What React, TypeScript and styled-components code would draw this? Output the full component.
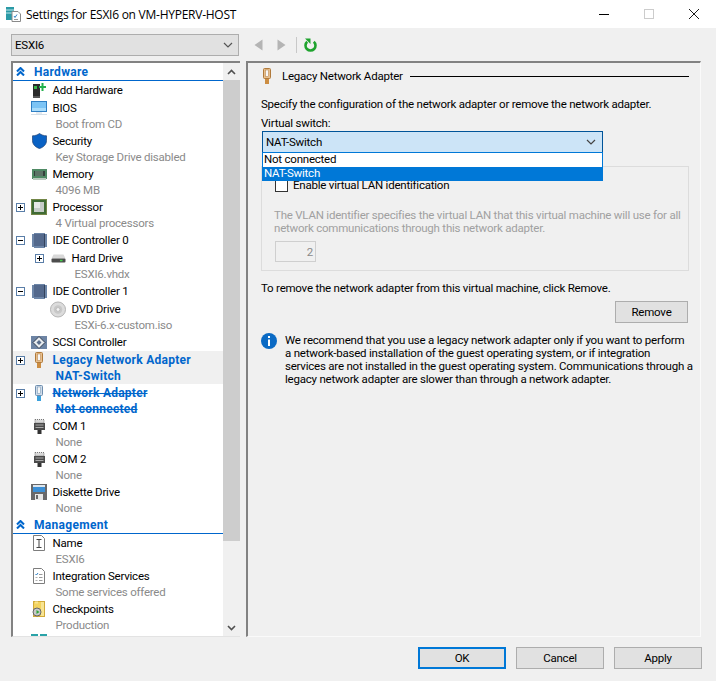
import React from 'react';
import styled, { createGlobalStyle } from 'styled-components';

const GlobalStyle = createGlobalStyle`
  html, body {
    margin: 0;
    padding: 0;
    background: #f0f0f0;
  }
  body {
    font-family: Roboto, "Liberation Sans", sans-serif;
    font-size: 11.5px;
    letter-spacing: -0.22px;
    color: #000;
  }
`;

const Page = styled.div`
  width: 716px;
  height: 681px;
  display: flex;
  flex-direction: column;
  overflow: hidden;
`;

const TitleBar = styled.div`
  height: 28px;
  background: #fff;
  display: flex;
  align-items: center;
  padding-left: 6px;
  gap: 5px;
  flex: none;
`;

const TitleText = styled.div`
  flex: 1;
  white-space: nowrap;
  font-family: "Open Sans", sans-serif;
  font-size: 12px;
  letter-spacing: -0.25px;
`;

const WindowButtons = styled.div`
  display: flex;
  align-items: center;
  gap: 35px;
  padding-right: 17px;
`;

const ToolRow = styled.div`
  height: 33px;
  display: flex;
  align-items: center;
  padding-left: 11px;
  flex: none;
`;

const Select = styled.div`
  width: 228px;
  height: 22px;
  box-sizing: border-box;
  background: #e1e1e1;
  border: 1px solid #adadad;
  display: flex;
  align-items: center;
  justify-content: space-between;
  padding: 0 5px 0 3px;
`;

const Tools = styled.div`
  display: flex;
  align-items: center;
  margin-left: 15px;
  gap: 14px;
`;

const ToolSep = styled.div`
  width: 1px;
  height: 16px;
  background: #c8c8c8;
  margin: 0 -7px 0 -4px;
`;

const Main = styled.div`
  display: flex;
  gap: 6px;
  padding-left: 11px;
  height: 576px;
  flex: none;
`;

const Sidebar = styled.div`
  width: 229px;
  box-sizing: border-box;
  background: #fff;
  border-top: 2px solid #828282;
  border-left: 2px solid #828282;
  border-bottom: 1px solid #e3e3e3;
  display: flex;
  overflow: hidden;
`;

const Tree = styled.div`
  flex: 1;
  min-width: 0;
  overflow: hidden;
`;

const Section = styled.div`
  height: 17px;
  border-bottom: 1px solid #0066cc;
  display: flex;
  align-items: center;
  gap: 9px;
  padding-left: 3px;
  color: #0066cc;
  font-size: 12px;
  letter-spacing: 0.3px;
  font-weight: 700;
`;

const Item = styled.div<{ $selected?: boolean }>`
  background: ${(p) => (p.$selected ? '#f0f0f0' : 'transparent')};
`;

const ItemRow = styled.div<{ $level: number }>`
  height: 18px;
  display: flex;
  align-items: center;
  padding-left: ${(p) => 3 + p.$level * 19}px;
`;

const Expander = styled.div`
  width: 15px;
  flex: none;
  display: flex;
`;

const IconSlot = styled.div`
  width: 16px;
  height: 18px;
  flex: none;
  margin-right: 5.5px;
  display: flex;
  align-items: center;
  justify-content: center;
`;

const ItemTitle = styled.div<{ $active?: boolean; $strike?: boolean }>`
  white-space: nowrap;
  color: ${(p) => (p.$active ? '#0066cc' : '#000')};
  font-weight: ${(p) => (p.$active ? 700 : 400)};
  font-size: ${(p) => (p.$active ? '12px' : 'inherit')};
  letter-spacing: ${(p) => (p.$active ? '0.25px' : 'inherit')};
  text-decoration: ${(p) => (p.$strike ? 'line-through' : 'none')};
`;

const ItemSub = styled.div<{ $level: number; $active?: boolean; $strike?: boolean }>`
  height: 15px;
  line-height: 14px;
  white-space: nowrap;
  padding-left: ${(p) => 42.5 + p.$level * 19}px;
  color: ${(p) => (p.$active ? '#0066cc' : '#8a8a8a')};
  font-weight: ${(p) => (p.$active ? 700 : 400)};
  font-size: ${(p) => (p.$active ? '12px' : 'inherit')};
  letter-spacing: ${(p) => (p.$active ? '0.25px' : 'inherit')};
  text-decoration: ${(p) => (p.$strike ? 'line-through' : 'none')};
`;

const ScrollBar = styled.div`
  width: 17px;
  flex: none;
  background: #f0f0f0;
  display: flex;
  flex-direction: column;
`;

const ScrollButton = styled.div`
  height: 17px;
  flex: none;
  display: flex;
  align-items: center;
  justify-content: center;
`;

const ScrollThumb = styled.div`
  height: 461px;
  flex: none;
  background: #cdcdcd;
`;

const ScrollTrack = styled.div`
  flex: 1;
`;

const Content = styled.div`
  width: 455px;
  box-sizing: border-box;
  border-top: 2px solid #828282;
  border-left: 2px solid #828282;
  border-right: 1px solid #fafafa;
  border-bottom: 1px solid #fafafa;
  padding: 0 11px 0 13px;
`;

const Heading = styled.div`
  height: 26px;
  display: flex;
  align-items: center;
  padding-left: 2px;
`;

const HeadingText = styled.div`
  margin-left: 11px;
  white-space: nowrap;
`;

const HeadingRule = styled.div`
  flex: 1;
  height: 1px;
  background: #000;
  margin-left: 7px;
`;

const Line = styled.div`
  height: 16px;
  line-height: 16px;
  white-space: nowrap;
`;

const Description = styled(Line)`
  margin-top: 7px;
`;

const Label = styled(Line)`
  margin-top: 3px;
`;

const ComboWrap = styled.div`
  position: relative;
  width: 341px;
  margin-left: 1px;
  height: 22px;
  z-index: 2;
`;

const Combo = styled.div`
  height: 22px;
  box-sizing: border-box;
  background: #cce4f7;
  border: 1px solid #005499;
  display: flex;
  align-items: center;
  justify-content: space-between;
  padding: 0 6px 0 3px;
`;

const DropList = styled.div`
  position: absolute;
  left: 0;
  right: 0;
  top: 21px;
  background: #fff;
  border: 1px solid #0078d7;
`;

const DropOption = styled.div<{ $on?: boolean }>`
  height: 13.5px;
  line-height: 13.5px;
  padding-left: 1px;
  background: ${(p) => (p.$on ? '#0078d7' : '#fff')};
  color: ${(p) => (p.$on ? '#fff' : '#000')};
`;

const VlanBox = styled.div`
  margin-top: 13px;
  height: 105px;
  box-sizing: border-box;
  border: 1px solid #dcdcdc;
  padding: 11px 12px 0 13px;
`;

const CheckRow = styled.div`
  display: flex;
  align-items: center;
  gap: 5px;
  height: 14px;
`;

const CheckBox = styled.div`
  width: 13px;
  height: 13px;
  box-sizing: border-box;
  background: #fff;
  border: 1px solid #333;
`;

const MutedLine = styled(Line)`
  color: #a0a0a0;
  height: 13px;
  line-height: 13px;
`;

const MutedText = styled.div`
  margin-top: 17px;
  margin-left: -1px;
`;

const Spin = styled.div`
  margin-top: 6px;
  width: 41px;
  height: 21px;
  box-sizing: border-box;
  border: 1px solid #cfcfcf;
  color: #8a8a8a;
  display: flex;
  align-items: center;
  justify-content: flex-end;
  padding-right: 2px;
`;

const RemoveText = styled(Line)`
  margin-top: 9px;
`;

const RemoveRow = styled.div`
  display: flex;
  justify-content: flex-end;
  margin-top: 5px;
  padding-right: 1px;
`;

const Button = styled.div<{ $primary?: boolean; $width?: number }>`
  width: ${(p) => p.$width || 88}px;
  height: 22px;
  box-sizing: border-box;
  background: #e1e1e1;
  border: ${(p) => (p.$primary ? '2px solid #0078d7' : '1px solid #adadad')};
  display: flex;
  align-items: center;
  justify-content: center;
`;

const Note = styled.div`
  margin-top: 10px;
  display: flex;
  gap: 8px;
`;

const NoteText = styled.div`
  margin-top: 1px;
`;

const NoteLine = styled.div`
  height: 13px;
  line-height: 13px;
  white-space: nowrap;
`;

const Footer = styled.div`
  display: flex;
  justify-content: flex-end;
  gap: 10px;
  padding: 10px 14px 0 0;
`;

type IconName =
  | 'add' | 'bios' | 'shield' | 'memory' | 'cpu' | 'ide' | 'hdd' | 'dvd' | 'scsi'
  | 'legacy' | 'nic' | 'com' | 'floppy' | 'name' | 'services' | 'checkpoint' | 'peek';

const Plug = ({ fill, dark, pin }: { fill: string; dark: string; pin: string }) => (
  <svg width="8" height="16" viewBox="0 0 8 16">
    <rect x="0.500" y="0.500" width="7" height="10" rx="1" fill={fill} stroke={dark} />
    <rect x="2.500" y="2" width="3" height="6.500" fill="#f7f7f7" stroke={dark} strokeWidth="0.500" />
    <rect x="2" y="11" width="4" height="5" fill={pin} />
  </svg>
);

const TreeIcon = ({ name }: { name: IconName }) => {
  switch (name) {
    case 'add':
      return (
        <svg width="14" height="17" viewBox="0 0 14 17">
          <rect x="1" y="2" width="7" height="12" fill="#2b2b2b" />
          <rect x="1" y="14" width="7" height="2" fill="#555" />
          <rect x="2" y="4" width="3" height="3" fill="#39b54a" />
          <path d="M7 4h2.500V1h2v3H14v2h-2.500v3h-2V6H7z" fill="#22b14c" />
        </svg>
      );
    case 'bios':
      return (
        <svg width="16" height="14" viewBox="0 0 16 14">
          <rect x="0.500" y="0.500" width="15" height="10" fill="#7cc4f5" stroke="#2f7fc4" />
          <rect x="1" y="7" width="14" height="3" fill="#a8dcfb" />
          <rect x="0" y="13" width="16" height="1" fill="#d5dfe8" />
          <rect x="5" y="11" width="6" height="2" fill="#e4ebf1" />
        </svg>
      );
    case 'shield':
      return (
        <svg width="15" height="16" viewBox="0 0 15 16">
          <path d="M7.500 0.500C5.500 2 3 2.800 0.500 2.800V7.500c0 4 3 6.800 7 8 4-1.200 7-4 7-8V2.800C12 2.800 9.500 2 7.500 0.500z" fill="#0a62c4" stroke="#1c3f73" strokeWidth="0.700" />
        </svg>
      );
    case 'memory':
      return (
        <svg width="15" height="11" viewBox="0 0 15 11">
          <rect x="0" y="0" width="15" height="10" fill="#4f8a64" />
          <rect x="2" y="2" width="11" height="5" fill="#33413a" />
          <path d="M4 2v5M6 2v5M8 2v5M10 2v5" stroke="#86a892" />
          <rect x="1" y="9" width="13" height="2" fill="#b9c9bd" />
        </svg>
      );
    case 'cpu':
      return (
        <svg width="16" height="16" viewBox="0 0 16 16">
          <rect x="0" y="0" width="16" height="16" fill="#3f6b35" />
          <rect x="0.500" y="0.500" width="15" height="15" fill="none" stroke="#a7a35a" strokeDasharray="1 1" />
          <rect x="3" y="3" width="10" height="10" fill="#c6ccc8" />
          <rect x="3" y="3" width="6" height="6" fill="#e6e8e6" />
        </svg>
      );
    case 'ide':
      return (
        <svg width="15" height="15" viewBox="0 0 15 15">
          <path d="M0 1h2V0h11v1h2v13h-2v1H2v-1H0z" fill="#6d86a8" />
          <rect x="2" y="1" width="10" height="12" fill="#54698c" />
          <rect x="12" y="1" width="1" height="13" fill="#33425c" />
        </svg>
      );
    case 'hdd':
      return (
        <svg width="15" height="9" viewBox="0 0 15 9">
          <path d="M2.500 0.500h10l2 4h-14z" fill="#d8d8d8" />
          <rect x="0.500" y="4.500" width="14" height="4" rx="1" fill="#4c4c4c" />
          <rect x="9" y="5.800" width="2.500" height="1.500" fill="#43d04a" />
        </svg>
      );
    case 'dvd':
      return (
        <svg width="17" height="17" viewBox="0 0 17 17">
          <circle cx="8.500" cy="8.500" r="8" fill="#dcdcdc" stroke="#b0b0b0" />
          <circle cx="8.500" cy="8.500" r="4.500" fill="#c8c8c8" />
          <circle cx="8.500" cy="8.500" r="2" fill="#f4f4f4" stroke="#a8a8a8" strokeWidth="0.600" />
        </svg>
      );
    case 'scsi':
      return (
        <svg width="16" height="13" viewBox="0 0 16 13">
          <path d="M0 0h16v13H0z" fill="#6d84a4" />
          <path d="M8 0.500L14 6.500l-6 6-6-6z" fill="#e8ecef" stroke="#2e3a4e" />
          <path d="M8 4L10.500 6.500 8 9 5.500 6.500z" fill="#5a6f8e" />
        </svg>
      );
    case 'legacy':
      return <Plug fill="#e8bf8c" dark="#b07a3c" pin="#cc8d42" />;
    case 'nic':
      return <Plug fill="#cfdcea" dark="#6f8eae" pin="#3aa0dc" />;
    case 'com':
      return (
        <svg width="11" height="15" viewBox="0 0 11 15">
          <rect x="1" y="0.500" width="9" height="3.500" fill="#d8d8d8" stroke="#777" strokeDasharray="1 1" />
          <rect x="0" y="4" width="11" height="7" fill="#4a4a4a" />
          <path d="M1.500 6h8M1.500 8.500h8" stroke="#a9a9a9" />
          <rect x="3.500" y="11" width="4" height="4" fill="#333" />
        </svg>
      );
    case 'floppy':
      return (
        <svg width="16" height="16" viewBox="0 0 16 16">
          <rect x="0" y="0" width="16" height="16" fill="#68686a" />
          <rect x="2" y="1" width="12" height="7" fill="#3b8fd6" />
          <rect x="2" y="1" width="12" height="2" fill="#dde6ee" />
          <rect x="4" y="10" width="8" height="6" fill="#e6e6e6" />
          <rect x="5" y="11" width="2" height="4" fill="#68686a" />
        </svg>
      );
    case 'name':
      return (
        <svg width="12" height="16" viewBox="0 0 12 16">
          <path d="M0.500 0.500h8l3 3v12h-11z" fill="#fff" stroke="#7d7d7d" />
          <path d="M3.500 4.500h5M6 4.500v8M3.500 12.500h5" fill="none" stroke="#444" />
        </svg>
      );
    case 'services':
      return (
        <svg width="12" height="16" viewBox="0 0 12 16">
          <path d="M0.500 0.500h8l3 3v12h-11z" fill="#fff" stroke="#7d7d7d" />
          <path d="M2.500 6l1 1 1.500-2" fill="none" stroke="#2f7fc4" />
          <path d="M6 6.500h3.500M6 9.500h3.500M6 12.500h3.500" stroke="#9a9a9a" />
          <path d="M2.500 9.500h2M2.500 12.500h2" stroke="#b0b0b0" />
        </svg>
      );
    case 'checkpoint':
      return (
        <svg width="14" height="16" viewBox="0 0 14 16">
          <rect x="1" y="0" width="12" height="16" fill="#f3d35e" />
          <rect x="1.500" y="0.500" width="11" height="15" fill="none" stroke="#d0a93a" />
          <path d="M9 1h3v14H9z" fill="#f8e492" />
          <circle cx="5" cy="11" r="4" fill="#c9c9c9" stroke="#666" />
          <path d="M4.500 9l3 2-3 2z" fill="#2da83a" />
          <path d="M3 0.500h3v2H3z" fill="#f8e492" />
        </svg>
      );
    case 'peek':
      return (
        <svg width="16" height="18" viewBox="0 0 16 18">
          <rect x="0" y="1" width="7" height="17" fill="#2aa3a8" />
          <rect x="9" y="1" width="7" height="17" fill="#2aa3a8" />
        </svg>
      );
  }
};

const PlusMinus = ({ minus }: { minus?: boolean }) => (
  <svg width="9" height="9" viewBox="0 0 9 9">
    <rect x="0.500" y="0.500" width="8" height="8" fill="#fff" stroke="#5a7ea8" />
    <path d={minus ? 'M2 4.500h5' : 'M2 4.500h5M4.500 2v5'} stroke="#000" />
  </svg>
);

const Chevrons = () => (
  <svg width="9" height="9" viewBox="0 0 9 9">
    <path d="M1 4.500l3.500-3.500 3.500 3.500M1 8.500l3.500-3.500 3.500 3.500" fill="none" stroke="#0066cc" strokeWidth="2.100" />
  </svg>
);

const Chevron = ({ color }: { color?: string }) => (
  <svg width="10" height="6" viewBox="0 0 10 6">
    <path d="M1 1l4 4 4-4" fill="none" stroke={color || '#555'} strokeWidth="1.200" />
  </svg>
);

const ScrollArrow = ({ up }: { up?: boolean }) => (
  <svg width="9" height="6" viewBox="0 0 9 6">
    <path d={up ? 'M1 5l3.500-3.500L8 5' : 'M1 1l3.500 3.500L8 1'} fill="none" stroke="#505050" strokeWidth="1.600" />
  </svg>
);

const AppIcon = () => (
  <svg width="15" height="16" viewBox="0 0 15 16">
    <rect x="0" y="1" width="8" height="13" fill="#2b9aa6" />
    <path d="M0 4h8M0 7h8" stroke="#bfe6ea" />
    <path d="M6 5.500h6l2.500 2.500v7.500H6z" fill="#fff" stroke="#8a8a8a" />
    <path d="M8 10l1 1.500 2-3" fill="none" stroke="#2f7fc4" />
    <path d="M8 13.500h4" stroke="#999" />
  </svg>
);

const NavArrow = ({ right }: { right?: boolean }) => (
  <svg width="9" height="12" viewBox="0 0 9 12">
    <path d={right ? 'M0.500 0.500L8.500 6l-8 5.500z' : 'M8.500 0.500L0.500 6l8 5.500z'} fill="#b4b4b4" />
  </svg>
);

const Refresh = () => (
  <svg width="13" height="14" viewBox="0 0 13 14">
    <path d="M9.800 3.800A5 5 0 1 1 3.200 3.800" fill="none" stroke="#1fa32e" strokeWidth="2.600" />
    <path d="M1 0.500h5.500v5.500z" fill="#1fa32e" />
  </svg>
);

const InfoIcon = () => (
  <svg width="16" height="16" viewBox="0 0 16 16" style={{ flex: 'none' }}>
    <circle cx="8" cy="8" r="8" fill="#0a6ac4" />
    <rect x="7" y="3" width="2" height="2" fill="#fff" />
    <rect x="7" y="6.500" width="2" height="6.500" fill="#fff" />
  </svg>
);

type TreeEntry = {
  icon: IconName;
  title?: string;
  sub?: string;
  level?: number;
  expander?: 'plus' | 'minus';
  active?: boolean;
  strike?: boolean;
  selected?: boolean;
};

const hardware: TreeEntry[] = [
  { icon: 'add', title: 'Add Hardware' },
  { icon: 'bios', title: 'BIOS', sub: 'Boot from CD' },
  { icon: 'shield', title: 'Security', sub: 'Key Storage Drive disabled' },
  { icon: 'memory', title: 'Memory', sub: '4096 MB' },
  { icon: 'cpu', title: 'Processor', sub: '4 Virtual processors', expander: 'plus' },
  { icon: 'ide', title: 'IDE Controller 0', expander: 'minus' },
  { icon: 'hdd', title: 'Hard Drive', sub: 'ESXI6.vhdx', level: 1, expander: 'plus' },
  { icon: 'ide', title: 'IDE Controller 1', expander: 'minus' },
  { icon: 'dvd', title: 'DVD Drive', sub: 'ESXi-6.x-custom.iso', level: 1 },
  { icon: 'scsi', title: 'SCSI Controller' },
  { icon: 'legacy', title: 'Legacy Network Adapter', sub: 'NAT-Switch', expander: 'plus', active: true, selected: true },
  { icon: 'nic', title: 'Network Adapter', sub: 'Not connected', expander: 'plus', active: true, strike: true },
  { icon: 'com', title: 'COM 1', sub: 'None' },
  { icon: 'com', title: 'COM 2', sub: 'None' },
  { icon: 'floppy', title: 'Diskette Drive', sub: 'None' },
];

const management: TreeEntry[] = [
  { icon: 'name', title: 'Name', sub: 'ESXI6' },
  { icon: 'services', title: 'Integration Services', sub: 'Some services offered' },
  { icon: 'checkpoint', title: 'Checkpoints', sub: 'Production' },
  { icon: 'peek' },
];

const TreeItem = ({ entry }: { entry: TreeEntry }) => {
  const level = entry.level || 0;
  return (
    <Item $selected={entry.selected}>
      <ItemRow $level={level}>
        <Expander>
          {entry.expander && <PlusMinus minus={entry.expander === 'minus'} />}
        </Expander>
        <IconSlot>
          <TreeIcon name={entry.icon} />
        </IconSlot>
        <ItemTitle $active={entry.active} $strike={entry.strike}>
          {entry.title}
        </ItemTitle>
      </ItemRow>
      {entry.sub && (
        <ItemSub $level={level} $active={entry.active} $strike={entry.strike}>
          {entry.sub}
        </ItemSub>
      )}
    </Item>
  );
};

export default function App() {
  return (
    <Page>
      <GlobalStyle />
      <TitleBar>
        <AppIcon />
        <TitleText>Settings for ESXI6 on VM-HYPERV-HOST</TitleText>
        <WindowButtons>
          <svg width="10" height="10" viewBox="0 0 10 10">
            <path d="M0 5.500h10" stroke="#000" />
          </svg>
          <svg width="10" height="10" viewBox="0 0 10 10">
            <rect x="0.500" y="0.500" width="9" height="9" fill="none" stroke="#ccc" />
          </svg>
          <svg width="10" height="10" viewBox="0 0 10 10">
            <path d="M0 0l10 10M10 0L0 10" stroke="#000" strokeWidth="0.900" />
          </svg>
        </WindowButtons>
      </TitleBar>
      <ToolRow>
        <Select>
          ESXI6
          <Chevron />
        </Select>
        <Tools>
          <NavArrow />
          <NavArrow right />
          <ToolSep />
          <Refresh />
        </Tools>
      </ToolRow>
      <Main>
        <Sidebar>
          <Tree>
            <Section>
              <Chevrons />
              Hardware
            </Section>
            {hardware.map((entry) => (
              <TreeItem key={entry.title} entry={entry} />
            ))}
            <Section>
              <Chevrons />
              Management
            </Section>
            {management.map((entry) => (
              <TreeItem key={entry.icon} entry={entry} />
            ))}
          </Tree>
          <ScrollBar>
            <ScrollButton>
              <ScrollArrow up />
            </ScrollButton>
            <ScrollThumb />
            <ScrollTrack />
            <ScrollButton>
              <ScrollArrow />
            </ScrollButton>
          </ScrollBar>
        </Sidebar>
        <Content>
          <Heading>
            <Plug fill="#e8bf8c" dark="#b07a3c" pin="#cc8d42" />
            <HeadingText>Legacy Network Adapter</HeadingText>
            <HeadingRule />
          </Heading>
          <Description>Specify the configuration of the network adapter or remove the network adapter.</Description>
          <Label>Virtual switch:</Label>
          <ComboWrap>
            <Combo>
              NAT-Switch
              <Chevron color="#444" />
            </Combo>
            <DropList>
              <DropOption>Not connected</DropOption>
              <DropOption $on>NAT-Switch</DropOption>
            </DropList>
          </ComboWrap>
          <VlanBox>
            <CheckRow>
              <CheckBox />
              Enable virtual LAN identification
            </CheckRow>
            <MutedText>
              <MutedLine>The VLAN identifier specifies the virtual LAN that this virtual machine will use for all</MutedLine>
              <MutedLine>network communications through this network adapter.</MutedLine>
            </MutedText>
            <Spin>2</Spin>
          </VlanBox>
          <RemoveText>To remove the network adapter from this virtual machine, click Remove.</RemoveText>
          <RemoveRow>
            <Button $width={73}>Remove</Button>
          </RemoveRow>
          <Note>
            <InfoIcon />
            <NoteText>
              <NoteLine>We recommend that you use a legacy network adapter only if you want to perform</NoteLine>
              <NoteLine>a network-based installation of the guest operating system, or if integration</NoteLine>
              <NoteLine>services are not installed in the guest operating system. Communications through a</NoteLine>
              <NoteLine>legacy network adapter are slower than through a network adapter.</NoteLine>
            </NoteText>
          </Note>
        </Content>
      </Main>
      <Footer>
        <Button $primary>OK</Button>
        <Button>Cancel</Button>
        <Button>Apply</Button>
      </Footer>
    </Page>
  );
}
